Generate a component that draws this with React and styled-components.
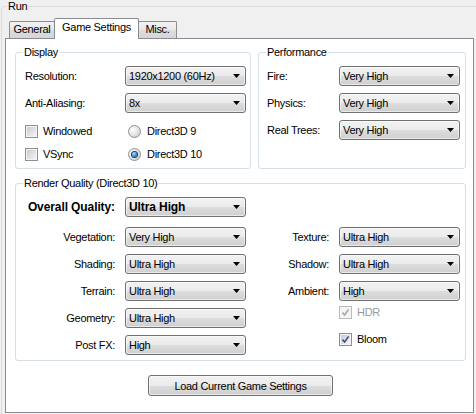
import React from 'react'
import styled, { createGlobalStyle } from 'styled-components'

const GlobalStyle = createGlobalStyle`
  html, body {
    margin: 0;
    background: #f0f0f0;
  }
  body {
    font-family: "Liberation Sans", Arial, sans-serif;
    font-size: 11px;
    letter-spacing: -0.3px;
    color: #000;
  }
`;

const Window = styled.div`
  width: 476px;
  height: 414px;
  overflow: hidden;
  background: #f0f0f0;
`;

const GroupBox = styled.fieldset`
  margin: 0;
  padding: 0;
  min-width: 0;
  box-sizing: border-box;
  border: 1px solid #d5dfe5;
  border-radius: 3px;
  height: ${p => p.$height}px;
`;

const RunGroup = styled(GroupBox)`
  margin-left: 1px;
  width: 500px;
  border-color: #dcdcdc;
`;

const Legend = styled.legend`
  margin-left: ${p => p.$indent}px;
  padding: 0 1px;
  line-height: 13px;
`;

const TabStrip = styled.div`
  display: flex;
  align-items: flex-end;
  height: 20px;
  margin: 5px 0 0 3px;
  padding-left: 4px;
`;

const Tab = styled.div`
  position: relative;
  z-index: ${p => (p.$active ? 1 : 0)};
  box-sizing: border-box;
  width: ${p => p.$w}px;
  height: ${p => (p.$active ? 21 : 17)}px;
  margin-bottom: ${p => (p.$active ? -1 : 0)}px;
  margin-left: ${p => (p.$first ? 0 : -1)}px;
  border: 1px solid #898c95;
  border-bottom: none;
  border-radius: 2px 2px 0 0;
  background: ${p => (p.$active ? '#fff' : 'linear-gradient(#f3f3f3, #e7e7e7 50%, #dcdcdc 51%, #d6d6d6)')};
  text-align: center;
  line-height: ${p => (p.$active ? 16 : 15)}px;
`;

const TabPanel = styled.div`
  box-sizing: border-box;
  width: 469px;
  height: 375px;
  margin-left: 3px;
  border: 1px solid #898c95;
  background: #fff;
  padding: 7px 7px 0 9px;
  display: grid;
  grid-template-columns: 236px 208px;
  column-gap: 7px;
  row-gap: 8px;
  align-content: start;
`;

const WideGroup = styled(GroupBox)`
  grid-column: 1 / -1;
`;

const GroupBody = styled.div`
  display: flex;
  flex-direction: column;
  gap: 7px;
  padding: 7px 0 0 ${p => p.$pad}px;
`;

const FieldRow = styled.div`
  display: flex;
  align-items: center;
  height: 20px;
`;

const Label = styled.span`
  box-sizing: border-box;
  flex: none;
  width: ${p => p.$w}px;
  text-align: ${p => (p.$right ? 'right' : 'left')};
  padding-right: ${p => (p.$right ? 10 : 0)}px;
  font-weight: ${p => (p.$bold ? 700 : 400)};
  font-size: ${p => (p.$bold ? 12 : 11)}px;
  letter-spacing: ${p => (p.$bold ? -0.1 : -0.3)}px;
`;

const ComboBox = styled.div`
  box-sizing: border-box;
  flex: none;
  width: 121px;
  height: 20px;
  display: flex;
  align-items: center;
  padding: 0 5px 0 3px;
  border: 1px solid #707070;
  border-radius: 3px;
  background: linear-gradient(#f2f2f2, #ebebeb 50%, #dddddd 51%, #cfcfcf);
  box-shadow: inset 0 0 0 1px rgba(255, 255, 255, 0.55);
  font-weight: ${p => (p.$bold ? 700 : 400)};
  font-size: ${p => (p.$bold ? 12 : 11)}px;
  letter-spacing: ${p => (p.$bold ? -0.1 : -0.3)}px;
`;

const ComboText = styled.span`
  flex: 1;
  white-space: nowrap;
`;

const CheckGrid = styled.div`
  display: grid;
  grid-template-columns: 103px auto;
  row-gap: 7px;
  margin-top: 3px;
`;

const Option = styled.label`
  display: flex;
  align-items: center;
  gap: ${p => (p.$radio ? 6 : 5)}px;
  height: 16px;
  color: ${p => (p.$disabled ? '#9a9a9a' : '#000')};
`;

const CheckBoxMark = styled.span`
  box-sizing: border-box;
  flex: none;
  width: 13px;
  height: 13px;
  display: flex;
  align-items: center;
  justify-content: center;
  border: 1px solid ${p => (p.$disabled ? '#bcbcbc' : '#8e8f8f')};
  background: ${p => (p.$disabled ? '#f4f4f4' : 'linear-gradient(135deg, #c3c7cd, #eeeff0 80%, #f6f6f6)')};
  box-shadow: inset 0 0 0 1px #f4f4f4;
`;

const RadioMark = styled.span`
  box-sizing: border-box;
  flex: none;
  width: 13px;
  height: 13px;
  border-radius: 50%;
  display: flex;
  align-items: center;
  justify-content: center;
  border: 1px solid #8e8f8f;
  background: radial-gradient(circle at 35% 35%, #ffffff, #e2e2e2 55%, #c4c4c4);
  &::after {
    content: '';
    display: ${p => (p.$checked ? 'block' : 'none')};
    width: 5px;
    height: 5px;
    border-radius: 50%;
    background: radial-gradient(circle at 40% 35%, #b3e3ff, #2a7fc8 60%, #174f8a);
    box-shadow: 0 0 0 1px #1c3d63;
  }
`;

const RenderBody = styled.div`
  display: grid;
  grid-template-columns: 230px 214px;
  padding-top: 7px;
`;

const OverallRow = styled(FieldRow)`
  grid-column: 1 / -1;
  margin-bottom: 10px;
`;

const Column = styled.div`
  display: flex;
  flex-direction: column;
  gap: 7px;
`;

const CheckStack = styled.div`
  display: flex;
  flex-direction: column;
  gap: 11px;
  margin: -4px 0 0 93px;
`;

const ButtonRow = styled.div`
  grid-column: 1 / -1;
  display: flex;
  justify-content: center;
  margin-top: 6px;
`;

const PushButton = styled.button`
  box-sizing: border-box;
  width: 185px;
  height: 21px;
  padding: 0;
  border: 1px solid #707070;
  border-radius: 3px;
  background: linear-gradient(#f2f2f2, #ebebeb 50%, #dddddd 51%, #cfcfcf);
  box-shadow: inset 0 0 0 1px rgba(255, 255, 255, 0.55);
  font: inherit;
  letter-spacing: -0.3px;
  color: #000;
`;

const Arrow = () => (
  <svg width="7" height="4" viewBox="0 0 7 4">
    <path d="M0 0h7L3.5 4z" fill="#000" />
  </svg>
);

const Combo = ({ value, bold }) => (
  <ComboBox $bold={bold}>
    <ComboText>{value}</ComboText>
    <Arrow />
  </ComboBox>
);

const Field = ({ label, value, w, right, bold }) => (
  <FieldRow>
    <Label $w={w} $right={right} $bold={bold}>{label}</Label>
    <Combo value={value} bold={bold} />
  </FieldRow>
);

const CheckBox = ({ label, checked, disabled }) => (
  <Option $disabled={disabled}>
    <CheckBoxMark $disabled={disabled}>
      {checked && (
        <svg width="9" height="9" viewBox="0 0 9 9">
          <path d="M1.5 4.6L3.6 7L7.6 1.4" fill="none" stroke={disabled ? '#a6a6a6' : '#3b4f86'} strokeWidth="1.6" />
        </svg>
      )}
    </CheckBoxMark>
    {label}
  </Option>
);

const Radio = ({ label, checked }) => (
  <Option $radio>
    <RadioMark $checked={checked} />
    {label}
  </Option>
);

const tabs = [
  { name: 'General', w: 46 },
  { name: 'Game Settings', w: 85, active: true },
  { name: 'Misc.', w: 39 },
];

const performance = [
  ['Fire:', 'Very High'],
  ['Physics:', 'Very High'],
  ['Real Trees:', 'Very High'],
];

const quality = [
  ['Vegetation:', 'Very High'],
  ['Shading:', 'Ultra High'],
  ['Terrain:', 'Ultra High'],
  ['Geometry:', 'Ultra High'],
  ['Post FX:', 'High'],
];

const qualityRight = [
  ['Texture:', 'Ultra High'],
  ['Shadow:', 'Ultra High'],
  ['Ambient:', 'High'],
];

const App = () => {
  return (
    <Window>
      <GlobalStyle />
      <RunGroup $height={440}>
        <Legend $indent={5}>Run</Legend>
        <TabStrip>
          {tabs.map((t, i) => (
            <Tab key={t.name} $w={t.w} $active={t.active} $first={i === 0}>{t.name}</Tab>
          ))}
        </TabStrip>
        <TabPanel>
          <GroupBox $height={123}>
            <Legend $indent={7}>Display</Legend>
            <GroupBody $pad={9}>
              <Field label="Resolution:" value="1920x1200 (60Hz)" w={100} />
              <Field label="Anti-Aliasing:" value="8x" w={100} />
              <CheckGrid>
                <CheckBox label="Windowed" />
                <Radio label="Direct3D 9" />
                <CheckBox label="VSync" />
                <Radio label="Direct3D 10" checked />
              </CheckGrid>
            </GroupBody>
          </GroupBox>

          <GroupBox $height={123}>
            <Legend $indent={7}>Performance</Legend>
            <GroupBody $pad={8}>
              {performance.map(([label, value]) => (
                <Field key={label} label={label} value={value} w={72} />
              ))}
            </GroupBody>
          </GroupBox>

          <WideGroup $height={184}>
            <Legend $indent={7}>Render Quality (Direct3D 10)</Legend>
            <RenderBody>
              <OverallRow>
                <Label $w={109} $right $bold>Overall Quality:</Label>
                <Combo value="Ultra High" bold />
              </OverallRow>
              <Column>
                {quality.map(([label, value]) => (
                  <Field key={label} label={label} value={value} w={109} right />
                ))}
              </Column>
              <Column>
                {qualityRight.map(([label, value]) => (
                  <Field key={label} label={label} value={value} w={93} right />
                ))}
                <CheckStack>
                  <CheckBox label="HDR" checked disabled />
                  <CheckBox label="Bloom" checked />
                </CheckStack>
              </Column>
            </RenderBody>
          </WideGroup>

          <ButtonRow>
            <PushButton>Load Current Game Settings</PushButton>
          </ButtonRow>
        </TabPanel>
      </RunGroup>
    </Window>
  )
}

export default App
